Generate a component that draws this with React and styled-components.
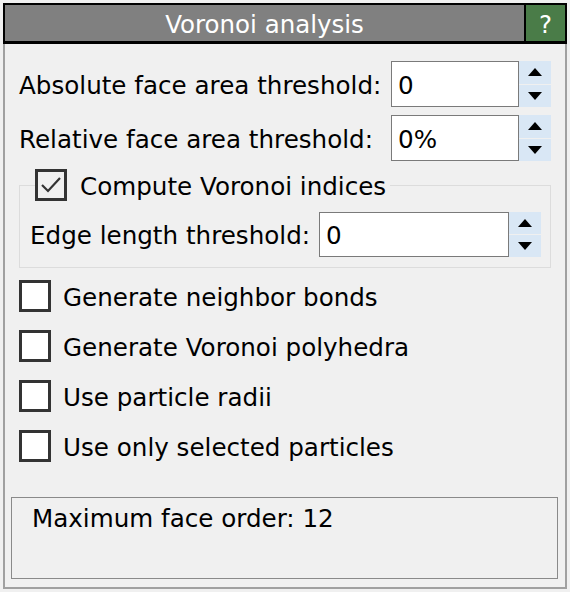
import React from "react";
import styled, { createGlobalStyle } from "styled-components";

const GlobalStyle = createGlobalStyle`
  html, body {
    margin: 0;
    padding: 0;
    background: #f0f0f0;
  }
  body {
    font-family: Tahoma, "DejaVu Sans", sans-serif;
    color: #000;
  }
`;

const Window = styled.div`
  width: 570px;
  height: 592px;
  padding: 3px;
  box-sizing: border-box;
  display: flex;
  flex-direction: column;
`;

const TitleBar = styled.div`
  display: flex;
  height: 41px;
  box-sizing: border-box;
  border: 2px solid #000;
  border-bottom-width: 3px;
  background: #808080;
`;

const Title = styled.div`
  flex: 1;
  display: flex;
  align-items: center;
  justify-content: center;
  padding-top: 3px;
  color: #fff;
  font-size: 24.5px;
`;

const HelpButton = styled.div`
  width: 39px;
  border-left: 2px solid #000;
  background: #4a7c48;
  color: #fff;
  font-size: 24.5px;
  padding-top: 3px;
  display: flex;
  align-items: center;
  justify-content: center;
`;

const Panel = styled.div`
  flex: 1;
  border: 2px solid #a0a0a0;
  border-top: none;
  padding: 17px 14px 8px 14px;
  display: flex;
  flex-direction: column;
  font-size: 24.6px;
`;

const FieldGrid = styled.div`
  display: grid;
  grid-template-columns: 372px 1fr;
  row-gap: 8px;
  align-items: center;
`;

const Label = styled.span`
  white-space: nowrap;
  padding-top: 2px;
`;

const SpinRow = styled.div`
  display: flex;
  height: ${(p) => p.$height || 46}px;
  width: ${(p) => p.$width}px;
  flex-shrink: 0;
`;

const Input = styled.div`
  flex: 1;
  box-sizing: border-box;
  border: 1px solid #7a7a7a;
  background: #fff;
  display: flex;
  align-items: center;
  padding: 2px 0 0 6px;
`;

const Spinner = styled.div`
  width: 32px;
  display: flex;
  flex-direction: column;
  gap: 1px;
  background: #f0f0f0;
`;

const SpinHalf = styled.div`
  flex: 1;
  background: #d9e7f5;
  display: flex;
  align-items: center;
  justify-content: center;
`;

const Arrow = ({ down }) => (
  <svg width="14" height="8" viewBox="0 0 14 8">
    {down ? <polygon points="0,0 14,0 7,8" fill="#000" /> : <polygon points="0,8 14,8 7,0" fill="#000" />}
  </svg>
);

const SpinBox = ({ value, width, height }) => (
  <SpinRow $width={width} $height={height}>
    <Input>{value}</Input>
    <Spinner>
      <SpinHalf>
        <Arrow />
      </SpinHalf>
      <SpinHalf>
        <Arrow down />
      </SpinHalf>
    </Spinner>
  </SpinRow>
);

const Group = styled.fieldset`
  margin: 8px 0 0 0;
  padding: 0 9px 10px 10px;
  border: 1px solid #dcdcdc;
  min-width: 0;
`;

const Legend = styled.legend`
  padding: 0 4px 0 0;
  margin-left: 5px;
  display: flex;
  align-items: center;
`;

const GroupRow = styled.div`
  display: flex;
  align-items: center;
  justify-content: space-between;
  margin-top: 11px;
`;

const Box = styled.span`
  width: 32px;
  height: 32px;
  box-sizing: border-box;
  border: 3px solid #333;
  background: ${(p) => (p.$checked ? "#f0f0f0" : "#fff")};
  display: inline-flex;
  align-items: center;
  justify-content: center;
  flex-shrink: 0;
`;

const CheckLabel = styled.label`
  display: flex;
  align-items: center;
  gap: ${(p) => p.$gap || 12}px;
  white-space: nowrap;
`;

const CheckText = styled.span`
  padding-top: 2px;
`;

const CheckList = styled.div`
  display: flex;
  flex-direction: column;
  gap: 18px;
  margin-top: 12px;
`;

const Check = ({ checked, children, gap }) => (
  <CheckLabel $gap={gap}>
    <Box $checked={checked}>
      {checked && (
        <svg width="22" height="18" viewBox="0 0 22 18">
          <polyline points="2,9 8,15 20,2" fill="none" stroke="#333" strokeWidth="2.2" />
        </svg>
      )}
    </Box>
    <CheckText>{children}</CheckText>
  </CheckLabel>
);

const InfoBox = styled.div`
  margin: auto -7px 0 -8px;
  height: 82px;
  box-sizing: border-box;
  border: 1px solid #8a8a8a;
  padding: 6px 20px;
`;

export default function App() {
  return (
    <>
      <GlobalStyle />
      <Window>
        <TitleBar>
          <Title>Voronoi analysis</Title>
          <HelpButton>?</HelpButton>
        </TitleBar>
        <Panel>
          <FieldGrid>
            <Label>Absolute face area threshold:</Label>
            <SpinBox value="0" width={160} />
            <Label>Relative face area threshold:</Label>
            <SpinBox value="0%" width={160} />
          </FieldGrid>
          <Group>
            <Legend>
              <Check checked gap={13}>Compute Voronoi indices</Check>
            </Legend>
            <GroupRow>
              <Label>Edge length threshold:</Label>
              <SpinBox value="0" width={222} height={45} />
            </GroupRow>
          </Group>
          <CheckList>
            <Check>Generate neighbor bonds</Check>
            <Check>Generate Voronoi polyhedra</Check>
            <Check>Use particle radii</Check>
            <Check>Use only selected particles</Check>
          </CheckList>
          <InfoBox>Maximum face order: 12</InfoBox>
        </Panel>
      </Window>
    </>
  );
}
